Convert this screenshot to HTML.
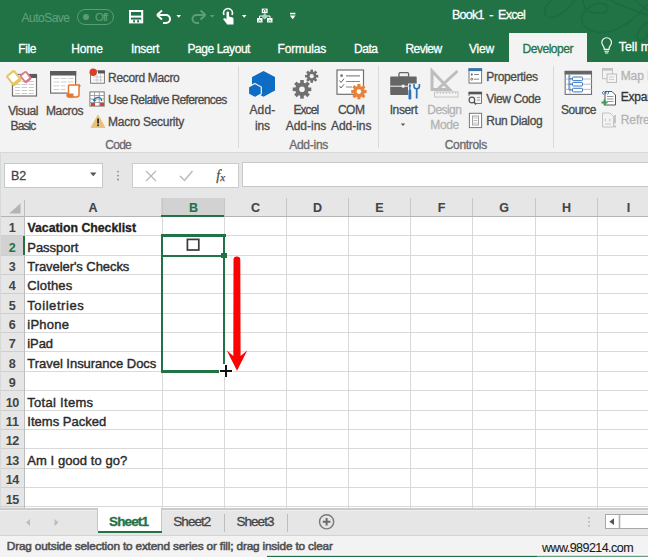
<!DOCTYPE html>
<html><head><meta charset="utf-8"><style>
html,body{margin:0;padding:0;}
body{width:648px;height:557px;position:relative;overflow:hidden;background:#fff;font-family:'Liberation Sans', sans-serif;}
.a{position:absolute;}
.t{position:absolute;white-space:pre;line-height:1;-webkit-text-stroke:0.3px currentColor;}
svg{position:absolute;overflow:visible;}
</style></head><body>
<!-- ===== title + tabs ===== -->
<div class="a" style="left:0;top:0;width:648px;height:62px;background:#217346"></div>
<svg width="648" height="62" style="left:0;top:0">
 <g fill="none" stroke="#1d6b3f" stroke-width="1.7">
  <path d="M553 0 C543 5 541 17 551.5 17.5 C559 18 567 9 575 0"/>
  <path d="M583 0 C583 6 585 10 590 12 C596 14 606 14 607.5 10 C609 5 602 2 596 4 C589 6 581 13 581.5 19 C582.5 28 592 33 604 32.5 C618 32 636 18 648 4"/>
  <path d="M610 0 C622 6 634 11 648 15"/>
  <path d="M635 0 C639 4 643 7 648 10"/>
  <path d="M648 22 C640 28 634 36 639 40 C643 42 647 37 648 33"/>
  </g>
</svg>
<div class="a" style="left:509px;top:33px;width:78px;height:29px;background:#f3f3f3"></div>
<!-- toggle -->
<div class="a" style="left:76.5px;top:9px;width:35px;height:13.5px;border:1.3px solid #5a9c75;border-radius:8px"></div>
<div class="a" style="left:82.5px;top:13.5px;width:6px;height:6px;border-radius:3px;background:#5a9c75"></div>
<!-- qat icons -->
<svg width="648" height="40" style="left:0;top:0">
 <!-- save -->
 <rect x="130" y="11" width="12.2" height="11.4" fill="none" stroke="#fff" stroke-width="2"/>
 <rect x="130" y="15.6" width="12.2" height="2" fill="#fff"/>
 <rect x="131" y="19.6" width="10.2" height="2.8" fill="#fff"/>
 <rect x="133.2" y="20.2" width="1.8" height="2.2" fill="#217346"/>
 <rect x="137.2" y="20.2" width="1.8" height="2.2" fill="#217346"/>
 <!-- undo -->
 <path d="M158.5 15 H166 A4 4 0 0 1 166 23 H163" fill="none" stroke="#fff" stroke-width="2"/>
 <path d="M157 15 L162 10.5 M157 15 L162 19.5" fill="none" stroke="#fff" stroke-width="2"/>
 <path d="M176.5 15 H181 L178.75 17.8 Z" fill="#fff"/>
 <!-- redo -->
 <path d="M204 15 H196.5 A4 4 0 0 0 196.5 23 H199" fill="none" stroke="#5f9d78" stroke-width="2"/>
 <path d="M205.5 15 L200.5 10.5 M205.5 15 L200.5 19.5" fill="none" stroke="#5f9d78" stroke-width="2"/>
 <path d="M210 15 H214.5 L212.25 17.8 Z" fill="#5f9d78"/>
 <!-- touch -->
 <path d="M224 15 A4.5 4.5 0 1 1 232 15" fill="none" stroke="#fff" stroke-width="1.6"/>
 <path d="M226.5 23.5 L223 19 L225 18 L226.5 19.5 V12.5 A1.3 1.3 0 0 1 229 12.5 V16.5 L232.5 17.5 A1.5 1.5 0 0 1 233.5 19 V24.5 H227 Z" fill="#fff"/>
 <path d="M242 15 H246.5 L244.25 17.8 Z" fill="#fff"/>
 <!-- tree -->
 <rect x="261.8" y="8.6" width="5.8" height="4.6" fill="#fff"/>
 <path d="M263.5 12 V10.8 A1.2 1.2 0 0 1 265.9 10.8 V12" fill="none" stroke="#217346" stroke-width="0.8"/>
 <rect x="257" y="18" width="5.5" height="4.5" fill="#fff"/>
 <rect x="267" y="18" width="5.5" height="4.5" fill="#fff"/>
 <path d="M259.5 18 V16 H270 V18 M264.75 13.5 V16" fill="none" stroke="#fff" stroke-width="1"/>
 <path d="M264.75 13.5 L268 16.5 L264.75 19.5 L261.5 16.5 Z" fill="#a9d6b9"/>
 <path d="M258.5 21.5 L259.75 19.8 L261 21.5 M268.5 21.5 L269.75 19.8 L271 21.5" fill="none" stroke="#217346" stroke-width="0.7"/>
 <!-- customize -->
 <rect x="290" y="12.8" width="5.4" height="1.5" fill="#fff"/>
 <path d="M289.8 15.5 H295.6 L292.7 19.3 Z" fill="#fff"/>
 <!-- lightbulb -->
 <path d="M604.2 49.3 V48 C604.2 46.5 601.8 45.3 601.8 42.6 A4.85 4.85 0 0 1 611.5 42.6 C611.5 45.3 609.1 46.5 609.1 48 V49.3 Z" fill="none" stroke="#fff" stroke-width="1.15"/>
 <path d="M604.3 51.2 H609 M605 53 H608.3" stroke="#fff" stroke-width="1.1"/>
</svg>

<!-- ===== ribbon ===== -->
<div class="a" style="left:0;top:62px;width:648px;height:90px;background:#f3f3f3"></div>
<div class="a" style="left:0;top:152px;width:648px;height:1px;background:#d8d8d8"></div>
<div class="a" style="left:238px;top:66px;width:1px;height:82px;background:#d9d9d9"></div>
<div class="a" style="left:378px;top:66px;width:1px;height:82px;background:#d9d9d9"></div>
<div class="a" style="left:553px;top:66px;width:1px;height:82px;background:#d9d9d9"></div>
<svg width="648" height="160" style="left:0;top:0">
 <!-- Visual Basic -->
 <rect x="12.5" y="74.5" width="24" height="21.5" fill="#fff" stroke="#707070" stroke-width="1.2"/>
 <rect x="27" y="74" width="10" height="4" fill="#5b5b5b"/>
 <g stroke="#cccccc" stroke-width="1.1">
  <path d="M15 81.5 H20 M21.5 81.5 H27 M28.5 81.5 H34 M15 84.5 H20 M21.5 84.5 H27 M28.5 84.5 H34 M15 87.5 H20 M21.5 87.5 H27 M28.5 87.5 H34 M15 90.5 H20 M21.5 90.5 H27 M28.5 90.5 H34 M15 93.5 H20 M21.5 93.5 H27 M28.5 93.5 H34"/>
 </g>
 <g transform="rotate(-38 13.8 78)">
  <rect x="8.3" y="71.3" width="11" height="13.6" rx="2" fill="#e6c462"/>
  <rect x="10.3" y="73.3" width="7" height="8" fill="#fff"/>
 </g>
 <g transform="rotate(-38 25.7 77.1)">
  <rect x="21.4" y="71.8" width="8.6" height="10.6" rx="2" fill="#d87a8c"/>
  <rect x="23.2" y="73.6" width="5" height="6.2" fill="#fff"/>
 </g>
 <!-- Macros -->
 <rect x="50.6" y="71.6" width="25" height="21.5" fill="#fff" stroke="#707070" stroke-width="1.2"/>
 <rect x="50" y="71" width="26.2" height="4.5" fill="#5b5b5b"/>
 <g stroke="#cfcfcf" stroke-width="1">
  <path d="M53.5 78.5 H59.5 M61 78.5 H66.5 M68 78.5 H73.5 M53.5 82 H59.5 M61 82 H66.5 M68 82 H73.5 M53.5 85.8 H59.5 M61 85.8 H65.5 M53.5 89.5 H59.5 M61 89.5 H65.5"/>
 </g>
 <path d="M68.5 85 H79 V94.5 Q79 97 76.5 97 H68" fill="#fff" stroke="#e8772e" stroke-width="1.5"/>
 <path d="M68.5 85 V94" fill="none" stroke="#e8772e" stroke-width="1.5"/>
 <path d="M66.3 95 Q66.3 93.5 68 93.5 H73.5 V97.5 H68 Q66.3 97.5 66.3 95.5 Z" fill="#e8772e"/>
 <path d="M79 84 L81 86 L79 87.5 Z" fill="#e8772e"/>
 <!-- Record Macro -->
 <rect x="90.6" y="71" width="13.8" height="12.2" fill="#fff" stroke="#777" stroke-width="1"/>
 <rect x="98" y="70.5" width="6.9" height="3" fill="#555"/>
 <path d="M93 77 H103 M93 80 H103 M97 74 V82 M100.5 74 V82" stroke="#c4c4c4" stroke-width="0.9"/>
 <circle cx="93.2" cy="72.2" r="3.7" fill="#d9402a"/>
 <!-- Use Relative -->
 <rect x="89.9" y="91.9" width="14.3" height="14.2" fill="#fff" stroke="#777" stroke-width="1"/>
 <path d="M90 95.5 H104 M90 99 H104 M90 102.5 H104 M94.6 92 V106 M99.3 92 V106" stroke="#999" stroke-width="0.9"/>
 <rect x="91" y="103" width="4" height="3" fill="#d9402a"/>
 <rect x="100" y="103" width="4" height="3" fill="#d9402a"/>
 <path d="M94 101 Q95 96.5 99.5 97.5 Q102 98.5 101.5 101" fill="none" stroke="#2e75b6" stroke-width="1.3"/>
 <path d="M92.5 99 L94 102.3 L96.5 100 Z" fill="#2e75b6"/>
 <!-- Macro security -->
 <path d="M98 115 L105 127.5 H91 Z" fill="#e8c27c" stroke="#e0b66c" stroke-width="0.6" stroke-linejoin="round"/>
 <rect x="97.2" y="118.5" width="1.7" height="5" fill="#222"/>
 <rect x="97.2" y="124.5" width="1.7" height="1.6" fill="#222"/>
 <!-- Add-ins hexagons -->
 <path d="M263.5 71 L275 77 V90.5 L263.5 96.8 L252 90.5 V77 Z" fill="#0f6cc4"/>
 <path d="M254.9 83.4 L261.3 87 V94 L254.9 97.6 L248.5 94 V87 Z" fill="#0f6cc4" stroke="#f3f3f3" stroke-width="1.2"/>
 <!-- gears -->
 <g fill="#707070">
  <g transform="translate(302 89.3)">
   <rect x="-1.8" y="-9.3" width="3.6" height="18.6"/>
   <rect x="-1.8" y="-9.3" width="3.6" height="18.6" transform="rotate(45)"/>
   <rect x="-1.8" y="-9.3" width="3.6" height="18.6" transform="rotate(90)"/>
   <rect x="-1.8" y="-9.3" width="3.6" height="18.6" transform="rotate(135)"/>
   <circle r="6.8"/>
  </g>
  <g transform="translate(311.7 76.2)">
   <rect x="-1.3" y="-6.6" width="2.6" height="13.2"/>
   <rect x="-1.3" y="-6.6" width="2.6" height="13.2" transform="rotate(45)"/>
   <rect x="-1.3" y="-6.6" width="2.6" height="13.2" transform="rotate(90)"/>
   <rect x="-1.3" y="-6.6" width="2.6" height="13.2" transform="rotate(135)"/>
   <circle r="4.8"/>
  </g>
 </g>
 <circle cx="302" cy="89.3" r="2.8" fill="#f3f3f3"/>
 <circle cx="311.7" cy="76.2" r="2.1" fill="#f3f3f3"/>
 <!-- COM add-ins -->
 <rect x="337" y="70" width="26.5" height="24.3" fill="#fff" stroke="#707070" stroke-width="1.2"/>
 <circle cx="341.6" cy="75.7" r="1.4" fill="#777"/>
 <path d="M346 75.8 H360 M346 81.5 H360 M346 87 H352" stroke="#8a8a8a" stroke-width="1.2"/>
 <path d="M339.5 80.5 L341 82.5 L344 78.8 M339.5 86 L341 88 L344 84.3" fill="none" stroke="#666" stroke-width="1"/>
 <g fill="#e8823a" transform="translate(358.9 91.6)">
  <rect x="-1.6" y="-7.7" width="3.2" height="15.4"/>
  <rect x="-1.6" y="-7.7" width="3.2" height="15.4" transform="rotate(45)"/>
  <rect x="-1.6" y="-7.7" width="3.2" height="15.4" transform="rotate(90)"/>
  <rect x="-1.6" y="-7.7" width="3.2" height="15.4" transform="rotate(135)"/>
  <circle r="5.7"/>
 </g>
 <circle cx="358.9" cy="91.6" r="2.3" fill="#fff"/>
 <!-- Insert briefcase -->
 <rect x="399" y="72.6" width="9.6" height="4.6" rx="1.2" fill="none" stroke="#666" stroke-width="1.3"/>
 <rect x="390.2" y="76.5" width="26.5" height="18.5" rx="1" fill="#666"/>
 <path d="M390.2 86.2 H416.7" stroke="#f3f3f3" stroke-width="1"/>
 <circle cx="403.1" cy="86.2" r="1.6" fill="#f3f3f3"/>
 <path d="M408 83.5 H420.5 V99 H408 Z" fill="#f3f3f3"/>
 <path d="M409.9 85 V91" stroke="#2e75b6" stroke-width="1.3"/>
 <path d="M409.9 91 V98.3" stroke="#2e75b6" stroke-width="2.8" stroke-linecap="round"/>
 <path d="M408.6 86.5 L409.9 83.5 L411.2 86.5 Z" fill="#2e75b6"/>
 <path d="M416.7 88 V98.5" stroke="#2e75b6" stroke-width="1.8"/>
 <path d="M414 84 V86 A2.7 2.7 0 0 0 419.4 86 V84" fill="none" stroke="#2e75b6" stroke-width="1.6"/>
 <!-- Design mode (disabled) -->
 <path d="M432 71 V89.5 H449.5 Z" fill="none" stroke="#bdbdbd" stroke-width="3" stroke-linejoin="miter"/>
 <path d="M457.5 71 L438.5 88.5" stroke="#bdbdbd" stroke-width="3"/>
 <path d="M436 90 L437.5 88.5" stroke="#bdbdbd" stroke-width="2"/>
 <rect x="434.5" y="92" width="23.5" height="5" fill="#f3f3f3" stroke="#c4c4c4" stroke-width="1"/>
 <path d="M437.5 92 V94 M440.5 92 V94 M443.5 92 V94 M446.5 92 V94 M449.5 92 V94 M452.5 92 V94 M455.5 92 V94" stroke="#c4c4c4" stroke-width="0.8"/>
 <!-- Properties -->
 <rect x="469" y="68.8" width="12.6" height="14.3" fill="#fff" stroke="#777" stroke-width="1"/>
 <rect x="468.5" y="68.3" width="13.6" height="2.8" fill="#2e75b6"/>
 <circle cx="471.8" cy="74.5" r="1" fill="#555"/>
 <circle cx="471.8" cy="79.2" r="1" fill="none" stroke="#555" stroke-width="0.8"/>
 <path d="M474 74.5 H479 M474 79.2 H479" stroke="#888" stroke-width="1"/>
 <!-- View code -->
 <path d="M475.5 103.5 H481.5 V92.3 H469 V96" fill="none" stroke="#777" stroke-width="1"/>
 <rect x="468.5" y="91.8" width="13.6" height="2.5" fill="#555"/>
 <path d="M477 97.5 H480 M477 100 H480" stroke="#999" stroke-width="0.9"/>
 <circle cx="471.9" cy="100" r="2.8" fill="none" stroke="#555" stroke-width="1.2"/>
 <path d="M473.9 102 L476 104.5" stroke="#555" stroke-width="1.6"/>
 <!-- Run Dialog -->
 <rect x="469.4" y="113.3" width="12.2" height="14.3" fill="#fff" stroke="#777" stroke-width="1"/>
 <rect x="472.5" y="116" width="6" height="9" fill="none" stroke="#999" stroke-width="0.9"/>
 <path d="M473.5 118 H477.5 M473.5 120.5 H477.5 M473.5 123 H477.5" stroke="#aaa" stroke-width="0.8"/>
 <!-- Source -->
 <rect x="565.2" y="71.4" width="26.3" height="23" fill="#fff" stroke="#707070" stroke-width="1.1"/>
 <rect x="564.7" y="70.9" width="27.3" height="3.6" fill="#666"/>
 <path d="M570 74.5 V94.3 M565 79 H592 M565 84.2 H592 M565 89.4 H592" stroke="#ababab" stroke-width="0.8"/>
 <path d="M569 74.5 V90 M569 78.8 H572.5 M569 84.2 H572.5 M569 90 H572.5" fill="none" stroke="#3c78c3" stroke-width="1"/>
 <rect x="572.5" y="77" width="10" height="3.6" rx="0.8" fill="#fff" stroke="#3c78c3" stroke-width="1"/>
 <rect x="572.5" y="82.4" width="10" height="3.6" rx="0.8" fill="#fff" stroke="#3c78c3" stroke-width="1"/>
 <rect x="572.5" y="88.3" width="10" height="3.6" rx="0.8" fill="#fff" stroke="#3c78c3" stroke-width="1"/>
 <!-- Map properties (disabled) -->
 <rect x="602.5" y="68.7" width="10" height="10" fill="none" stroke="#c2c2c2" stroke-width="1"/>
 <rect x="602" y="68.2" width="11" height="2.5" fill="#c2c2c2"/>
 <rect x="607" y="74" width="9.5" height="8.5" fill="#f3f3f3" stroke="#bdbdbd" stroke-width="1"/>
 <path d="M609 77 H614 M609 79.5 H614" stroke="#c8c8c8" stroke-width="0.8"/>
 <!-- Expand packs -->
 <path d="M605 91.5 H612 L615.5 95 V105 H605 Z" fill="#fff" stroke="#555" stroke-width="1"/>
 <path d="M607 96.5 H613.5 M607 99 H613.5 M607 101.5 H613.5" stroke="#777" stroke-width="0.8"/>
 <path d="M602 92.8 L603.8 91.2 M602 92.8 L603.8 94.4 M609 92.8 L607.2 91.2 M609 92.8 L607.2 94.4" stroke="#2e75b6" stroke-width="1"/>
 <circle cx="605.5" cy="92.8" r="1.1" fill="#2e75b6"/>
 <path d="M601.5 102.5 H607.5 M604.5 99.5 V105.5" stroke="#3a9a5b" stroke-width="1.8"/>
 <!-- Refresh (disabled) -->
 <path d="M602.5 113 H610 L613.5 116.5 V127 H602.5 Z" fill="none" stroke="#c2c2c2" stroke-width="1"/>
 <path d="M604.5 120 L606 118.8 M604.5 120 L606 121.2 M610.5 120 L609 118.8 M610.5 120 L609 121.2 M605 124 H611" stroke="#c2c2c2" stroke-width="0.9"/>
 <path d="M615 115 V123.5 M615 125.5 V127.5" stroke="#c2c2c2" stroke-width="1.8"/>
 <!-- Insert dropdown -->
 <path d="M400.8 123.5 H405.2 L403 126 Z" fill="#555"/>
</svg>
<!-- ===== formula bar ===== -->
<div class="a" style="left:0;top:153px;width:648px;height:45px;background:#e6e6e6"></div>
<div class="a" style="left:4px;top:163px;width:97px;height:23px;background:#fff;border:1px solid #c8c8c8"></div>
<div class="a" style="left:132px;top:163px;width:105px;height:23px;background:#fff;border:1px solid #cdcdcd"></div>
<div class="a" style="left:242px;top:162px;width:420px;height:23px;background:#fff;border:1px solid #c8c8c8"></div>
<svg width="648" height="200" style="left:0;top:0">
 <path d="M90 172.5 H96.5 L93.25 176.3 Z" fill="#555"/>
 <circle cx="118" cy="171.6" r="0.9" fill="#888"/>
 <circle cx="118" cy="175.6" r="0.9" fill="#888"/>
 <circle cx="118" cy="179.5" r="0.9" fill="#888"/>
 <path d="M146 171 L156 181 M156 171 L146 181" stroke="#b9b9b9" stroke-width="1.3"/>
 <path d="M180 176 L184.5 180.5 L192.5 171" fill="none" stroke="#b9b9b9" stroke-width="1.5"/>
</svg>
<div class="t" style="left:216.3px;top:168.5px;font:italic 14px/1 'Liberation Serif',serif;color:#4a4a4a;-webkit-text-stroke:0.25px #4a4a4a">f<span style="font-size:11px;position:relative;top:1px;left:0px">x</span></div>
<!-- ===== grid ===== -->
<div class="a" style="left:0;top:198px;width:648px;height:311px;background:#fff"></div>
<div class="a" style="left:0;top:198px;width:648px;height:18px;background:#e6e6e6"></div>
<div class="a" style="left:0;top:216px;width:24px;height:293px;background:#e6e6e6"></div>
<div class="a" style="left:161px;top:198px;width:63px;height:18px;background:#d2d2d2"></div>
<div class="a" style="left:0;top:236px;width:24px;height:19px;background:#d2d2d2"></div>
<svg width="648" height="557" style="left:0;top:0" shape-rendering="crispEdges">
 <g stroke="#d9d9d9" stroke-width="1">
  <path d="M162.5 217 V508 M224.5 217 V508 M286.5 217 V508 M348.5 217 V508 M410.5 217 V508 M472.5 217 V508 M535.5 217 V508 M597.5 217 V508"/>
  <path d="M25 235.5 H648 M25 255.5 H648 M25 274.5 H648 M25 293.5 H648 M25 313.5 H648 M25 332.5 H648 M25 351.5 H648 M25 371.5 H648 M25 390.5 H648 M25 410.5 H648 M25 429.5 H648 M25 448.5 H648 M25 468.5 H648 M25 487.5 H648 M25 506.5 H648"/>
 </g>
 <g stroke="#cfcfcf" stroke-width="1">
  <path d="M0 235.5 H24 M0 255.5 H24 M0 274.5 H24 M0 293.5 H24 M0 313.5 H24 M0 332.5 H24 M0 351.5 H24 M0 371.5 H24 M0 390.5 H24 M0 410.5 H24 M0 429.5 H24 M0 448.5 H24 M0 468.5 H24 M0 487.5 H24 M0 506.5 H24"/>
 </g>
 <g stroke="#c6c6c6" stroke-width="1">
  <path d="M162.5 198 V216 M224.5 198 V216 M286.5 198 V216 M348.5 198 V216 M410.5 198 V216 M472.5 198 V216 M535.5 198 V216 M597.5 198 V216"/>
 </g>
 <path d="M0 216.5 H648" stroke="#b4b4b4"/>
 <path d="M24.5 200 V509" stroke="#bdbdbd"/>
 <path d="M0.5 153 V557" stroke="#d8d8d8"/>
</svg>
<svg width="648" height="557" style="left:0;top:0"><path d="M20.5 203.2 V213.4 H9.2 Z" fill="#b4b4b4"/></svg>
<!-- selection -->
<div class="a" style="left:161px;top:215px;width:63px;height:2px;background:#217346"></div>
<div class="a" style="left:23px;top:236px;width:2px;height:19px;background:#217346"></div>
<div class="a" style="left:161px;top:234px;width:64.5px;height:2.5px;background:#217346"></div>
<div class="a" style="left:160.8px;top:234px;width:2.6px;height:138px;background:#217346"></div>
<div class="a" style="left:222.7px;top:234px;width:2.8px;height:130px;background:#217346"></div>
<div class="a" style="left:161px;top:370px;width:58.5px;height:2.6px;background:#217346"></div>
<div class="a" style="left:162px;top:255px;width:59px;height:2px;background:#217346"></div>
<div class="a" style="left:221.3px;top:253px;width:5.4px;height:4.8px;background:#217346"></div>
<!-- checkbox -->
<svg width="648" height="557" style="left:0;top:0"><rect x="187.4" y="239.4" width="11.4" height="10.6" fill="none" stroke="#3a3a3a" stroke-width="1.7"/></svg>
<!-- red arrow -->
<svg width="648" height="557" style="left:0;top:0"><path d="M233.5 260 Q233.5 256.6 236.9 256.6 Q240.3 256.6 240.3 260 L240.6 356 L247.2 350.5 L237 370.8 L226.8 350.5 L233.3 356 Z" fill="#fb0303"/></svg>
<!-- plus cursor -->
<div class="a" style="left:219px;top:369px;width:14px;height:4px;background:#fff"></div>
<div class="a" style="left:224px;top:364px;width:4px;height:13px;background:#fff"></div>
<div class="a" style="left:220px;top:370px;width:12px;height:2px;background:#111"></div>
<div class="a" style="left:225px;top:365px;width:2px;height:11.5px;background:#111"></div>
<!-- ===== sheet tab bar ===== -->
<div class="a" style="left:0;top:508px;width:648px;height:28px;background:#e6e6e6"></div>
<div class="a" style="left:0;top:508px;width:648px;height:1px;background:#cdcdcd"></div>
<div class="a" style="left:0;top:509px;width:648px;height:1px;background:#c9c9c9"></div>
<div class="a" style="left:0;top:510px;width:648px;height:1px;background:#efefef"></div>
<div class="a" style="left:97px;top:508px;width:63px;height:23px;background:#fff;border-left:1px solid #c6c6c6;border-right:1px solid #c6c6c6"></div>
<div class="a" style="left:97.5px;top:531px;width:64px;height:2px;background:#217346"></div>
<div class="a" style="left:224px;top:514px;width:1px;height:18px;background:#bdbdbd"></div>
<div class="a" style="left:287px;top:514px;width:1px;height:18px;background:#bdbdbd"></div>
<svg width="648" height="557" style="left:0;top:0">
 <path d="M30 519 V526 L26 522.5 Z" fill="#bdbdbd"/>
 <path d="M54.5 519 V526 L58.5 522.5 Z" fill="#bdbdbd"/>
 <circle cx="326.6" cy="521.8" r="7.1" fill="none" stroke="#7a7a7a" stroke-width="1.4"/>
 <path d="M322.8 521.8 H330.4 M326.6 518 V525.6" stroke="#6a6a6a" stroke-width="2"/>
 <circle cx="589" cy="517.8" r="0.9" fill="#aaa"/>
 <circle cx="589" cy="521.8" r="0.9" fill="#aaa"/>
 <circle cx="589" cy="525.8" r="0.9" fill="#aaa"/>
 <rect x="605.5" y="514.5" width="50" height="14" fill="#fff" stroke="#a8a8a8"/>
 <path d="M619.5 514.5 V528.5" stroke="#b0b0b0" stroke-width="1.6"/>
 <path d="M614 518.3 V525 L609.3 521.65 Z" fill="#555"/>
</svg>
<!-- ===== status bar ===== -->
<div class="a" style="left:0;top:535px;width:648px;height:22px;background:#f3f3f3"></div>
<div class="a" style="left:0;top:535px;width:648px;height:1px;background:#d3d3d3"></div>
<div class="a" style="left:267px;top:554px;width:381px;height:1px;background:#fafafa"></div>
<div class="a" style="left:267px;top:555px;width:381px;height:1px;background:#d0e0d6"></div>
<div class="a" style="left:267px;top:556px;width:270px;height:1px;background:#217346"></div>
<div class="a" style="left:537px;top:556px;width:111px;height:1px;background:#6a9f80"></div>

<div class="t" style="left:21.50px;top:12.00px;font-size:12px;font-weight:normal;color:#62a07b;letter-spacing:-0.506px;-webkit-text-stroke:0.1px currentColor;">AutoSave</div>
<div class="t" style="left:95.00px;top:12.42px;font-size:11.5px;font-weight:normal;color:#62a07b;letter-spacing:-1.047px;-webkit-text-stroke:0.1px currentColor;">Off</div>
<div class="t" style="left:452.00px;top:9.18px;font-size:12.5px;font-weight:normal;color:#ffffff;letter-spacing:-0.739px;">Book1  -  Excel</div>
<div class="t" style="left:18.30px;top:42.80px;font-size:12px;font-weight:normal;color:#ffffff;letter-spacing:-0.411px;">File</div>
<div class="t" style="left:71.30px;top:42.80px;font-size:12px;font-weight:normal;color:#ffffff;letter-spacing:-0.154px;">Home</div>
<div class="t" style="left:131.00px;top:42.80px;font-size:12px;font-weight:normal;color:#ffffff;letter-spacing:-0.336px;">Insert</div>
<div class="t" style="left:187.50px;top:42.80px;font-size:12px;font-weight:normal;color:#ffffff;letter-spacing:-0.445px;">Page Layout</div>
<div class="t" style="left:277.50px;top:42.80px;font-size:12px;font-weight:normal;color:#ffffff;letter-spacing:-0.189px;">Formulas</div>
<div class="t" style="left:354.00px;top:42.80px;font-size:12px;font-weight:normal;color:#ffffff;letter-spacing:-0.465px;">Data</div>
<div class="t" style="left:405.50px;top:42.80px;font-size:12px;font-weight:normal;color:#ffffff;letter-spacing:-0.560px;">Review</div>
<div class="t" style="left:469.00px;top:42.80px;font-size:12px;font-weight:normal;color:#ffffff;letter-spacing:-0.199px;">View</div>
<div class="t" style="left:522.50px;top:42.80px;font-size:12px;font-weight:normal;color:#217346;letter-spacing:-0.467px;">Developer</div>
<div class="t" style="left:618.70px;top:40.56px;font-size:12.4px;font-weight:normal;color:#ffffff;letter-spacing:0.000px;">Tell me</div>
<div class="t" style="left:8.25px;top:104.80px;font-size:12px;font-weight:normal;color:#4a4a4a;letter-spacing:-0.461px;">Visual</div>
<div class="t" style="left:10.50px;top:120.20px;font-size:12px;font-weight:normal;color:#4a4a4a;letter-spacing:-0.869px;">Basic</div>
<div class="t" style="left:45.95px;top:104.80px;font-size:12px;font-weight:normal;color:#4a4a4a;letter-spacing:-0.341px;">Macros</div>
<div class="t" style="left:108.10px;top:71.60px;font-size:12px;font-weight:normal;color:#4a4a4a;letter-spacing:-0.338px;">Record Macro</div>
<div class="t" style="left:108.10px;top:93.80px;font-size:12px;font-weight:normal;color:#4a4a4a;letter-spacing:-0.615px;">Use Relative References</div>
<div class="t" style="left:108.10px;top:115.60px;font-size:12px;font-weight:normal;color:#4a4a4a;letter-spacing:-0.295px;">Macro Security</div>
<div class="t" style="left:105.35px;top:139.10px;font-size:12px;font-weight:normal;color:#6a6a6a;letter-spacing:-0.747px;">Code</div>
<div class="t" style="left:249.40px;top:104.30px;font-size:12px;font-weight:normal;color:#4a4a4a;letter-spacing:0.160px;">Add-</div>
<div class="t" style="left:255.00px;top:119.80px;font-size:12px;font-weight:normal;color:#4a4a4a;letter-spacing:-0.115px;">ins</div>
<div class="t" style="left:293.40px;top:104.30px;font-size:12px;font-weight:normal;color:#4a4a4a;letter-spacing:-0.909px;">Excel</div>
<div class="t" style="left:285.75px;top:119.80px;font-size:12px;font-weight:normal;color:#4a4a4a;letter-spacing:-0.027px;">Add-ins</div>
<div class="t" style="left:337.90px;top:104.30px;font-size:12px;font-weight:normal;color:#4a4a4a;letter-spacing:-0.467px;">COM</div>
<div class="t" style="left:331.00px;top:119.80px;font-size:12px;font-weight:normal;color:#4a4a4a;letter-spacing:-0.041px;">Add-ins</div>
<div class="t" style="left:289.15px;top:138.80px;font-size:12px;font-weight:normal;color:#6a6a6a;letter-spacing:-0.255px;">Add-ins</div>
<div class="t" style="left:389.65px;top:103.80px;font-size:12px;font-weight:normal;color:#4a4a4a;letter-spacing:-0.386px;">Insert</div>
<div class="t" style="left:427.35px;top:103.80px;font-size:12px;font-weight:normal;color:#b3b3b3;letter-spacing:-0.577px;">Design</div>
<div class="t" style="left:430.20px;top:119.10px;font-size:12px;font-weight:normal;color:#b3b3b3;letter-spacing:-0.308px;">Mode</div>
<div class="t" style="left:486.30px;top:70.50px;font-size:12px;font-weight:normal;color:#4a4a4a;letter-spacing:-0.330px;">Properties</div>
<div class="t" style="left:486.30px;top:92.70px;font-size:12px;font-weight:normal;color:#4a4a4a;letter-spacing:-0.403px;">View Code</div>
<div class="t" style="left:486.30px;top:114.80px;font-size:12px;font-weight:normal;color:#4a4a4a;letter-spacing:-0.327px;">Run Dialog</div>
<div class="t" style="left:444.70px;top:138.80px;font-size:12px;font-weight:normal;color:#6a6a6a;letter-spacing:-0.311px;">Controls</div>
<div class="t" style="left:561.00px;top:104.00px;font-size:12px;font-weight:normal;color:#4a4a4a;letter-spacing:-0.505px;">Source</div>
<div class="t" style="left:620.70px;top:69.60px;font-size:12px;font-weight:normal;color:#b3b3b3;letter-spacing:-0.098px;">Map Properties</div>
<div class="t" style="left:620.70px;top:91.40px;font-size:12px;font-weight:normal;color:#333333;letter-spacing:-0.227px;">Expand Packs</div>
<div class="t" style="left:620.70px;top:114.00px;font-size:12px;font-weight:normal;color:#b3b3b3;letter-spacing:-0.059px;">Refresh Data</div>
<div class="t" style="left:11.00px;top:170.38px;font-size:12.5px;font-weight:normal;color:#444444;letter-spacing:0.000px;">B2</div>
<div class="t" style="left:88.48px;top:202.18px;font-size:12.5px;font-weight:bold;color:#444444;letter-spacing:0.000px;-webkit-text-stroke:0.1px currentColor;">A</div>
<div class="t" style="left:188.98px;top:202.18px;font-size:12.5px;font-weight:bold;color:#217346;letter-spacing:0.000px;-webkit-text-stroke:0.1px currentColor;">B</div>
<div class="t" style="left:250.98px;top:202.18px;font-size:12.5px;font-weight:bold;color:#444444;letter-spacing:0.000px;-webkit-text-stroke:0.1px currentColor;">C</div>
<div class="t" style="left:312.98px;top:202.18px;font-size:12.5px;font-weight:bold;color:#444444;letter-spacing:0.000px;-webkit-text-stroke:0.1px currentColor;">D</div>
<div class="t" style="left:375.33px;top:202.18px;font-size:12.5px;font-weight:bold;color:#444444;letter-spacing:0.000px;-webkit-text-stroke:0.1px currentColor;">E</div>
<div class="t" style="left:437.68px;top:202.18px;font-size:12.5px;font-weight:bold;color:#444444;letter-spacing:0.000px;-webkit-text-stroke:0.1px currentColor;">F</div>
<div class="t" style="left:499.13px;top:202.18px;font-size:12.5px;font-weight:bold;color:#444444;letter-spacing:0.000px;-webkit-text-stroke:0.1px currentColor;">G</div>
<div class="t" style="left:561.98px;top:202.18px;font-size:12.5px;font-weight:bold;color:#444444;letter-spacing:0.000px;-webkit-text-stroke:0.1px currentColor;">H</div>
<div class="t" style="left:626.76px;top:202.18px;font-size:12.5px;font-weight:bold;color:#444444;letter-spacing:0.000px;-webkit-text-stroke:0.1px currentColor;">I</div>
<div class="t" style="left:8.79px;top:221.59px;font-size:12.6px;font-weight:bold;color:#444444;letter-spacing:0.000px;-webkit-text-stroke:0px;">1</div>
<div class="t" style="left:8.79px;top:241.59px;font-size:12.6px;font-weight:bold;color:#217346;letter-spacing:0.000px;-webkit-text-stroke:0px;">2</div>
<div class="t" style="left:8.79px;top:260.59px;font-size:12.6px;font-weight:bold;color:#444444;letter-spacing:0.000px;-webkit-text-stroke:0px;">3</div>
<div class="t" style="left:8.79px;top:279.59px;font-size:12.6px;font-weight:bold;color:#444444;letter-spacing:0.000px;-webkit-text-stroke:0px;">4</div>
<div class="t" style="left:8.79px;top:299.59px;font-size:12.6px;font-weight:bold;color:#444444;letter-spacing:0.000px;-webkit-text-stroke:0px;">5</div>
<div class="t" style="left:8.79px;top:318.59px;font-size:12.6px;font-weight:bold;color:#444444;letter-spacing:0.000px;-webkit-text-stroke:0px;">6</div>
<div class="t" style="left:8.79px;top:337.59px;font-size:12.6px;font-weight:bold;color:#444444;letter-spacing:0.000px;-webkit-text-stroke:0px;">7</div>
<div class="t" style="left:8.79px;top:357.59px;font-size:12.6px;font-weight:bold;color:#444444;letter-spacing:0.000px;-webkit-text-stroke:0px;">8</div>
<div class="t" style="left:8.79px;top:376.59px;font-size:12.6px;font-weight:bold;color:#444444;letter-spacing:0.000px;-webkit-text-stroke:0px;">9</div>
<div class="t" style="left:5.85px;top:396.59px;font-size:12.6px;font-weight:bold;color:#444444;letter-spacing:-0.558px;-webkit-text-stroke:0px;">10</div>
<div class="t" style="left:5.85px;top:415.59px;font-size:12.6px;font-weight:bold;color:#444444;letter-spacing:-0.214px;-webkit-text-stroke:0px;">11</div>
<div class="t" style="left:5.85px;top:434.59px;font-size:12.6px;font-weight:bold;color:#444444;letter-spacing:-0.558px;-webkit-text-stroke:0px;">12</div>
<div class="t" style="left:5.85px;top:454.59px;font-size:12.6px;font-weight:bold;color:#444444;letter-spacing:-0.558px;-webkit-text-stroke:0px;">13</div>
<div class="t" style="left:5.85px;top:473.59px;font-size:12.6px;font-weight:bold;color:#444444;letter-spacing:-0.558px;-webkit-text-stroke:0px;">14</div>
<div class="t" style="left:5.85px;top:493.59px;font-size:12.6px;font-weight:bold;color:#444444;letter-spacing:-0.558px;-webkit-text-stroke:0px;">15</div>
<div class="t" style="left:27.50px;top:222.04px;font-size:12.3px;font-weight:bold;color:#222222;letter-spacing:-0.010px;">Vacation Checklist</div>
<div class="t" style="left:27.30px;top:240.75px;font-size:13px;font-weight:normal;color:#2a2a2a;letter-spacing:-0.039px;-webkit-text-stroke:0.4px currentColor;">Passport</div>
<div class="t" style="left:27.30px;top:259.75px;font-size:13px;font-weight:normal;color:#2a2a2a;letter-spacing:-0.067px;-webkit-text-stroke:0.4px currentColor;">Traveler's Checks</div>
<div class="t" style="left:27.30px;top:278.75px;font-size:13px;font-weight:normal;color:#2a2a2a;letter-spacing:0.132px;-webkit-text-stroke:0.4px currentColor;">Clothes</div>
<div class="t" style="left:27.30px;top:298.75px;font-size:13px;font-weight:normal;color:#2a2a2a;letter-spacing:0.570px;-webkit-text-stroke:0.4px currentColor;">Toiletries</div>
<div class="t" style="left:27.30px;top:317.75px;font-size:13px;font-weight:normal;color:#2a2a2a;letter-spacing:0.219px;-webkit-text-stroke:0.4px currentColor;">iPhone</div>
<div class="t" style="left:27.30px;top:336.75px;font-size:13px;font-weight:normal;color:#2a2a2a;letter-spacing:-0.083px;-webkit-text-stroke:0.4px currentColor;">iPad</div>
<div class="t" style="left:27.30px;top:356.75px;font-size:13px;font-weight:normal;color:#2a2a2a;letter-spacing:-0.028px;-webkit-text-stroke:0.4px currentColor;">Travel Insurance Docs</div>
<div class="t" style="left:27.30px;top:395.75px;font-size:13px;font-weight:normal;color:#2a2a2a;letter-spacing:0.286px;-webkit-text-stroke:0.4px currentColor;">Total Items</div>
<div class="t" style="left:27.30px;top:414.75px;font-size:13px;font-weight:normal;color:#2a2a2a;letter-spacing:0.020px;-webkit-text-stroke:0.4px currentColor;">Items Packed</div>
<div class="t" style="left:27.30px;top:453.75px;font-size:13px;font-weight:normal;color:#2a2a2a;letter-spacing:0.062px;-webkit-text-stroke:0.4px currentColor;">Am I good to go?</div>
<div class="t" style="left:109.10px;top:514.82px;font-size:13.5px;font-weight:bold;color:#217346;letter-spacing:-0.880px;">Sheet1</div>
<div class="t" style="left:173.30px;top:514.82px;font-size:13.5px;font-weight:normal;color:#444444;letter-spacing:-0.966px;">Sheet2</div>
<div class="t" style="left:236.50px;top:514.82px;font-size:13.5px;font-weight:normal;color:#444444;letter-spacing:-0.966px;">Sheet3</div>
<div class="t" style="left:6.80px;top:541.17px;font-size:11.8px;font-weight:normal;color:#505050;letter-spacing:-0.170px;-webkit-text-stroke:0.55px currentColor;">Drag outside selection to extend series or fill; drag inside to clear</div>
<div class="t" style="left:542.00px;top:541.67px;font-size:12.5px;font-weight:normal;color:#1a1a1a;letter-spacing:-0.548px;-webkit-text-stroke:0.1px currentColor;">www.989214.com</div>
</body></html>
